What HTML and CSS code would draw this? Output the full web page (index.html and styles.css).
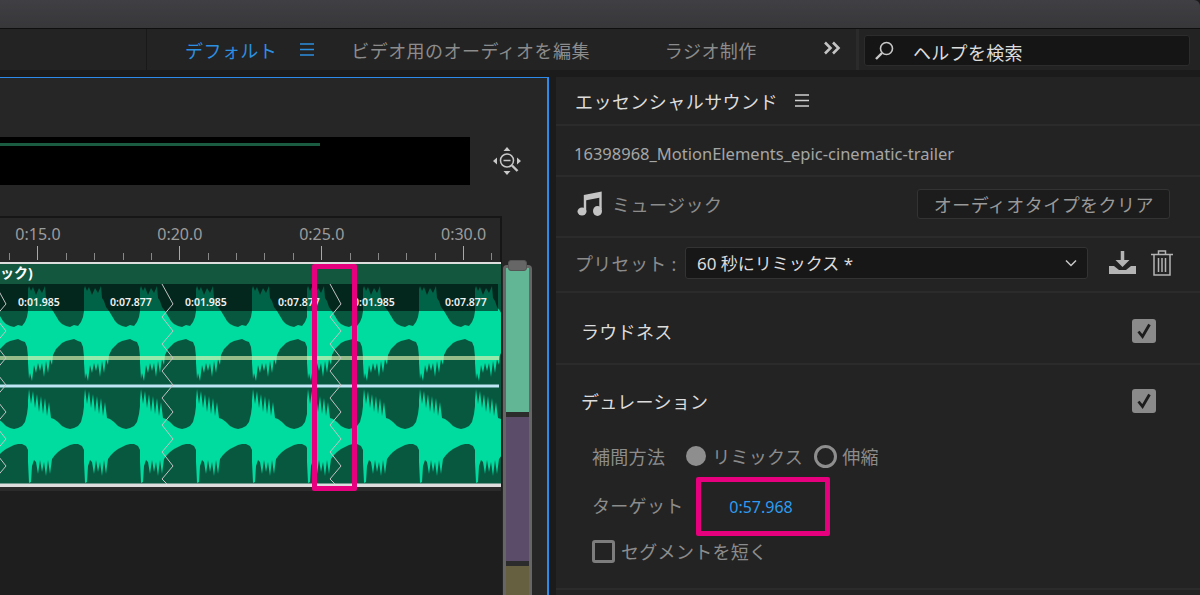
FILE: index.html
```html
<!DOCTYPE html>
<html lang="ja">

<head>
    <meta charset="UTF-8">
    <title>エッセンシャルサウンド</title>
    <link rel="stylesheet" href="styles.css">
</head>

<body>
    <div class="titlebar"></div>

    <div class="tabs">
        <div class="tabs-left"></div>
        <div class="tab-list">
            <span class="tab active">デフォルト</span>
            <svg class="tab-menu" width="14" height="13" viewBox="0 0 14 13"><path d="M0 1h14M0 6.5h14M0 12h14" stroke="#2d8fe0" stroke-width="1.6"/></svg>
            <span class="tab tab-video">ビデオ用のオーディオを編集</span>
            <span class="tab tab-radio">ラジオ制作</span>
            <svg class="tab-more" width="18" height="14" viewBox="0 0 18 14"><path d="M2 1.5l5.5 5.5L2 12.500M10 1.500l5.500 5.500L10 12.500" fill="none" stroke="#c4c4c4" stroke-width="2.600"/></svg>
        </div>
        <div class="search">
            <svg width="22" height="22" viewBox="0 0 22 22"><circle cx="12.500" cy="8.500" r="6" fill="none" stroke="#c8c8c8" stroke-width="1.600"/><path d="M8 13l-6 6" stroke="#c8c8c8" stroke-width="2.400"/></svg>
            <span>ヘルプを検索</span>
        </div>
    </div>

    <div class="main">
        <div class="left-panel">
            <div class="overview">
                <div class="overview-bar"><div class="overview-line"></div></div>
                <svg class="zoom-icon" width="30" height="30" viewBox="0 0 30 30">
                    <path d="M15 1l3.500 4h-7zM15 29l-3.500-4h7zM1 15l4-3.500v7zM29 15l-4 3.500v-7z" fill="#c8c8c8"/>
                    <circle cx="15" cy="14.500" r="6.500" fill="none" stroke="#c8c8c8" stroke-width="1.500"/>
                    <path d="M11.500 14.500h7" stroke="#c8c8c8" stroke-width="1.500"/>
                    <path d="M20 19.500l5.500 5.500" stroke="#c8c8c8" stroke-width="2.400"/>
                </svg>
            </div>

            <div class="timeline-row">
                <div class="timeline">
                    <div class="ruler">
                        <div class="ruler-labels">
                            <span>0:15.0</span>
                            <span>0:20.0</span>
                            <span>0:25.0</span>
                            <span>0:30.0</span>
                        </div>
                        <div class="ruler-ticks"></div>
                    </div>
                    <div class="clip">
                        <div class="clip-title">ック)</div>
                        <svg class="wave" width="501" height="207" viewBox="0 0 501 207">
                            <defs>
                                <path id="lobe-a" d="M0-44L1-47L3-42L5-46L8-38L11-45L14-40L17-47L18-35L20-32L22-26L25-22L28-17L31-12L34-9L38-7L42-6L46-8L50-7L53-11L55-16L56-22L56 24L55 14L53 9L50 8L46 6L42 7L38 8L34 10L31 13L28 16L25 22L24 32L22 26L20 40L18 28L16 44L14 30L12 38L10 30L8 40L6 32L4 48L2 40L1 46L0 30Z"/>
                                <path id="lobe-b" d="M0-36L1-47L3-32L5-45L7-28L9-42L11-24L13-40L15-22L17-38L19-20L21-34L23-18L26-17L30-14L34-10L38-8L42-7L46-8L50-10L53-14L55-22L56-30L56 14L54 10L50 8L46 8L42 9L38 11L34 13L30 16L27 19L24 23L22 38L20 24L18 40L16 26L14 36L12 24L10 38L8 26L6 24L4 30L3 46L1 47L0 26Z"/>
                                <path id="zigzag" d="M-5 0L6 20L-5 33L6 47L-5 60L6 74L-5 87L6 101L-5 114L6 128L-5 141L6 155L-5 168L6 182L-5 195L0 200" fill="none" stroke="#c4c4c4" stroke-width="1"/>
                            </defs>
                            <rect width="501" height="207" fill="#08573f"/>
                            <g class="lobes" transform="translate(0 49)">
                                <use href="#lobe-a" x="-28"/><use href="#lobe-a" x="28"/><use href="#lobe-a" x="84"/><use href="#lobe-a" x="140"/><use href="#lobe-a" x="196"/><use href="#lobe-a" x="252"/><use href="#lobe-a" x="307"/><use href="#lobe-a" x="363"/><use href="#lobe-a" x="419"/><use href="#lobe-a" x="475"/>
                            </g>
                            <g class="lobes" transform="translate(0 152)">
                                <use href="#lobe-b" x="-28"/><use href="#lobe-b" x="28"/><use href="#lobe-b" x="84"/><use href="#lobe-b" x="140"/><use href="#lobe-b" x="196"/><use href="#lobe-b" x="252"/><use href="#lobe-b" x="307"/><use href="#lobe-b" x="363"/><use href="#lobe-b" x="419"/><use href="#lobe-b" x="475"/>
                            </g>
                            <rect width="498" height="27" fill="#000" opacity="0.55"/>
                            <rect y="72" width="499" height="4" fill="#e6f2b0" opacity="0.65"/>
                            <rect y="100.500" width="499" height="3" fill="#bfe6f5"/>
                            <rect y="199.500" width="501" height="3.500" fill="#dedede"/>
                            <rect y="203" width="501" height="4" fill="#2b2b2b"/>
                            <use href="#zigzag" x="0"/>
                            <use href="#zigzag" x="167"/>
                            <use href="#zigzag" x="335"/>
                            <g class="wave-times">
                                <text x="18" y="22">0:01.985</text>
                                <text x="110" y="22">0:07.877</text>
                                <text x="185" y="22">0:01.985</text>
                                <text x="278" y="22">0:07.877</text>
                                <text x="353" y="22">0:01.985</text>
                                <text x="445" y="22">0:07.877</text>
                            </g>
                        </svg>
                    </div>
                    <div class="highlight"></div>
                </div>
                <div class="meter">
                    <div class="meter-handle"></div>
                    <div class="meter-track">
                        <div class="meter-green"></div>
                        <div class="meter-purple"></div>
                        <div class="meter-olive"></div>
                    </div>
                </div>
            </div>
        </div>

        <div class="right-panel">
            <div class="section panel-head">
                <span>エッセンシャルサウンド</span>
                <svg width="14" height="13" viewBox="0 0 14 13"><path d="M0 1h14M0 6.500h14M0 12h14" stroke="#cfcfcf" stroke-width="1.500"/></svg>
            </div>
            <div class="section file-name">16398968_MotionElements_epic-cinematic-trailer</div>
            <div class="section type-row">
                <svg width="26" height="26" viewBox="0 0 26 26"><path d="M8 20V5L23.500 2v16" fill="none" stroke="#c4c4c4" stroke-width="2.400"/><path d="M8 4.500L23.500 1.500v5L8 9.500z" fill="#c4c4c4"/><ellipse cx="5" cy="20.500" rx="4.500" ry="4" fill="#c4c4c4"/><ellipse cx="20.500" cy="20" rx="4.500" ry="5" fill="#c4c4c4"/></svg>
                <span class="type-name">ミュージック</span>
                <button class="clear-button">オーディオタイプをクリア</button>
            </div>
            <div class="section preset-row">
                <span class="preset-label">プリセット :</span>
                <div class="preset-select">
                    <span>60 秒にリミックス *</span>
                    <svg width="12" height="8" viewBox="0 0 12 8"><path d="M1 1.500l5 5 5-5" fill="none" stroke="#c8c8c8" stroke-width="1.500"/></svg>
                </div>
                <svg class="download-icon" width="27" height="23" viewBox="0 0 27 23"><path d="M13.500 0v11" stroke="#b4b4b4" stroke-width="3.500"/><path d="M6.500 9h14l-7 7z" fill="#b4b4b4"/><path d="M0 15h5l5 4h7l5-4h5v8H0z" fill="#b4b4b4"/></svg>
                <svg class="trash-icon" width="22" height="26" viewBox="0 0 22 26"><path d="M0 4.500h22M7.500 4V1h7v3M3 5v20h16V5M7.500 8v14M11 8v14M14.500 8v14" fill="none" stroke="#b4b4b4" stroke-width="1.500"/></svg>
            </div>
            <div class="section loudness">
                <span class="effect-name">ラウドネス</span>
                <div class="check"><svg width="16" height="16" viewBox="0 0 16 16"><path d="M2.500 8.500l4 5 7-12" fill="none" stroke="#1c1c1c" stroke-width="2.800"/></svg></div>
            </div>
            <div class="section duration">
                <div class="duration-head">
                    <span class="effect-name">デュレーション</span>
                    <div class="check"><svg width="16" height="16" viewBox="0 0 16 16"><path d="M2.500 8.500l4 5 7-12" fill="none" stroke="#1c1c1c" stroke-width="2.800"/></svg></div>
                </div>
                <div class="method-row">
                    <span class="method-label">補間方法</span>
                    <span class="radio radio-on"></span>
                    <span class="method-option">リミックス</span>
                    <span class="radio radio-off"></span>
                    <span class="method-option">伸縮</span>
                </div>
                <div class="target-row">
                    <span class="target-label">ターゲット</span>
                    <div class="target-value">0:57.968</div>
                </div>
                <div class="short-row">
                    <span class="short-box"></span>
                    <span>セグメントを短く</span>
                </div>
            </div>
        </div>
    </div>
</body>

</html>
```

FILE: styles.css
```css
* {
    box-sizing: border-box;
}

body {
    margin: 0;
    width: 1200px;
    height: 595px;
    overflow: hidden;
    background: #1b1b1b;
    font-family: "Noto Sans", "Noto Sans CJK JP", sans-serif;
    font-size: 18px;
    color: #8c8c8c;
}

.titlebar {
    height: 29px;
    background: linear-gradient(#404044, #37373a);
    border-bottom: 1px solid #0f0f0f;
    border-top-right-radius: 6px;
}

.tabs {
    display: flex;
    height: 41px;
    margin-bottom: 7px;
    background: #232323;
}

.tabs-left {
    width: 147px;
    border-right: 1px solid #191919;
}

.tab-list {
    display: flex;
    align-items: center;
    width: 712px;
    border-right: 3px solid #2b2b2b;
    padding-left: 38px;
}

.tab {
    letter-spacing: 0.45px;
    white-space: nowrap;
}

.tab.active {
    color: #2d8fe0;
}

.tab-menu {
    margin-left: 23px;
}

.tab-video {
    margin-left: 37px;
}

.tab-radio {
    margin-left: 75px;
}

.tab-more {
    margin-left: 66px;
    margin-top: -4px;
}

.search {
    display: flex;
    align-items: center;
    width: 326px;
    height: 31px;
    margin: 6px 0 0 5px;
    padding-left: 9px;
    background: #151515;
    border: 1px solid #2c2c2c;
    border-radius: 3px;
    color: #dcdcdc;
    letter-spacing: 0.3px;
}

.search span {
    margin-left: 17px;
    margin-top: 3px;
}

.main {
    display: flex;
    height: 518px;
}

.left-panel {
    width: 549px;
    border-top: 1px solid #2d8ceb;
    border-right: 2px solid #2d8ceb;
    background: #262626;
}

.overview {
    display: flex;
    align-items: center;
    height: 48px;
    margin-top: 59px;
}

.overview-bar {
    width: 470px;
    height: 48px;
    padding-top: 6px;
    background: #000;
}

.overview-line {
    width: 320px;
    height: 3px;
    background: #1a5c42;
}

.zoom-icon {
    margin-left: 22px;
}

.timeline-row {
    display: flex;
    margin-top: 31px;
}

.timeline {
    position: relative;
    width: 502px;
    height: 380px;
    background: #1e1e1e;
}

.ruler {
    height: 46px;
    padding-top: 6px;
    background: #272727;
    border-top: 2px solid #161616;
    border-right: 2px solid #161616;
}

.ruler-labels {
    display: flex;
    margin-left: -33px;
    font-size: 16px;
    line-height: 20px;
    color: #9c9c9c;
}

.ruler-labels span {
    width: 141.9px;
    flex-shrink: 0;
    text-align: center;
}

.ruler-ticks {
    height: 14px;
    margin-top: 2px;
    background:
        repeating-linear-gradient(90deg, #a8a8a8 0 1px, transparent 1px 141.9px) 37px 0 / 100% 14px no-repeat,
        repeating-linear-gradient(90deg, #888 0 1px, transparent 1px 28.38px) 8.6px 7px / 100% 7px no-repeat;
}

.clip {
    border-top: 2px solid #dedede;
    width: 501px;
}

.clip-title {
    height: 20px;
    margin-top: 0;
    background: #14573f;
    color: #fff;
    font-size: 14px;
    font-weight: 700;
    line-height: 18px;
    white-space: nowrap;
}

.wave {
    display: block;
}

.lobes {
    fill: #00dba0;
}

.wave-times {
    font-size: 10.500px;
    font-weight: 600;
    fill: #f2f2f2;
}

.highlight {
    position: absolute;
    left: 312px;
    top: 48px;
    width: 45px;
    height: 227px;
    border: 5px solid #e6007e;
    border-radius: 2px;
}

.meter {
    position: relative;
    flex: 1;
    padding: 49px 15px 0 1px;
}

.meter-handle {
    position: absolute;
    left: 6px;
    top: 44px;
    width: 19px;
    height: 11px;
    background: #666;
    border: 1px solid #555;
    border-radius: 3px;
}

.meter-track {
    height: 330px;
    padding: 3px 3px 0;
    background: #666;
    border-radius: 4px 4px 0 0;
}

.meter-green {
    height: 144px;
    background: #62b595;
}

.meter-purple {
    height: 149px;
    margin-top: 0;
    background: #5b4c6a;
    border-top: 5px solid #2c2c2c;
}

.meter-olive {
    height: 40px;
    background: #665f40;
    border-top: 5px solid #2c2c2c;
}

.right-panel {
    flex: 1;
    margin-left: 7px;
    background: #232323;
}

.section {
    display: flex;
    align-items: center;
    border-bottom: 2px solid #2b2b2b;
    padding-left: 19px;
    white-space: nowrap;
}

.panel-head {
    height: 49px;
    color: #dcdcdc;
    letter-spacing: 0.45px;
}

.panel-head svg {
    margin-left: 17px;
}

.file-name {
    height: 51px;
    padding: 6px 0 0 18px;
    font-size: 16.500px;
    color: #a6a6a6;
}

.type-row {
    height: 61px;
    padding: 0 0 6px 21px;
}

.type-name {
    margin-left: 9px;
    letter-spacing: 0.45px;
}

.clear-button {
    margin-left: 195px;
    width: 253px;
    height: 30px;
    padding: 0;
    background: #1c1c1c;
    border: 1px solid #333;
    border-radius: 3px;
    color: #999;
    font: inherit;
    letter-spacing: 0.45px;
}

.preset-row {
    height: 55px;
    padding-bottom: 4px;
}

.preset-label {
    width: 110px;
    letter-spacing: 0.300px;
}

.preset-select {
    display: flex;
    align-items: center;
    justify-content: space-between;
    width: 403px;
    height: 32px;
    padding: 0 10px 0 11px;
    background: #171717;
    border: 1px solid #333;
    border-radius: 3px;
    color: #dcdcdc;
    font-size: 17px;
}

.download-icon {
    margin-left: 21px;
}

.trash-icon {
    margin-left: 15px;
}

.loudness {
    justify-content: space-between;
    height: 72px;
    padding: 6px 44px 0 25px;
}

.effect-name {
    color: #dcdcdc;
    letter-spacing: 0.300px;
}

.check {
    display: flex;
    align-items: center;
    justify-content: center;
    width: 24px;
    height: 24px;
    background: #8a8a8a;
    border-radius: 3px;
}

.duration {
    display: block;
    height: 225px;
    padding: 23px 44px 0 25px;
}

.duration-head {
    display: flex;
    align-items: center;
    justify-content: space-between;
    height: 26px;
}

.method-row,
.target-row,
.short-row {
    display: flex;
    align-items: center;
    padding-left: 11px;
    letter-spacing: 0.300px;
}

.method-row {
    margin-top: 30px;
    height: 24px;
}

.method-option {
    margin-left: 6px;
}

.method-option:last-child {
    margin-left: 5px;
}

.radio {
    width: 20px;
    height: 20px;
    border-radius: 50%;
}

.radio-on {
    margin-left: 21px;
    background: #8e8e8e;
}

.radio-off {
    width: 23px;
    height: 23px;
    margin-left: 11px;
    border: 3px solid #8e8e8e;
}

.target-row {
    margin-top: 9px;
}

.target-label {
    margin-top: -4px;
}

.target-value {
    display: flex;
    align-items: center;
    justify-content: center;
    width: 134px;
    height: 59px;
    margin-left: 12px;
    padding-right: 3px;
    border: 5px solid #e6007e;
    border-radius: 2px;
    color: #2d9cf0;
    font-size: 16px;
    letter-spacing: 0;
}

.short-row {
    margin-top: 2px;
}

.short-box {
    width: 23px;
    height: 23px;
    margin-right: 6px;
    border: 3px solid #7d7d7d;
    border-radius: 3px;
}
```
